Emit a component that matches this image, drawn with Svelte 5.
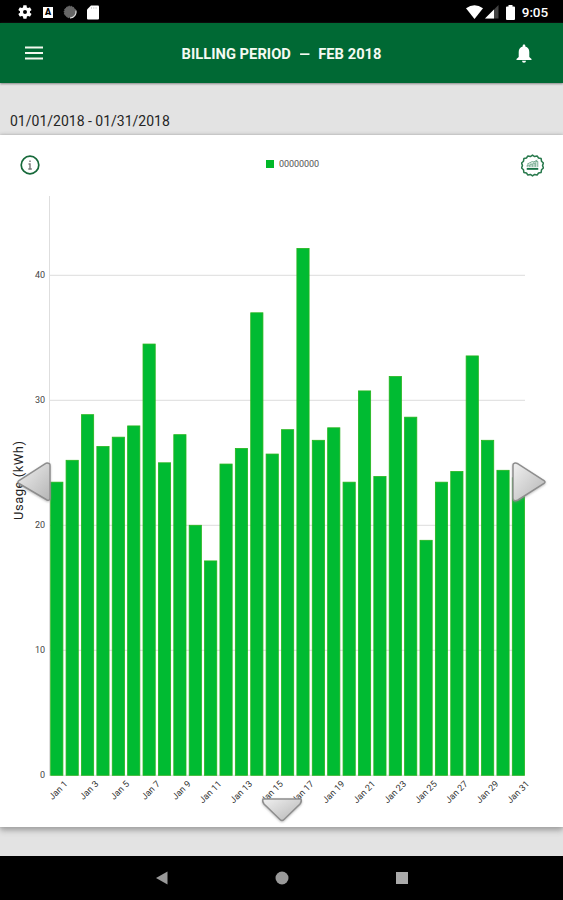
<script>
  const values = [23.45, 25.2, 28.85, 26.3, 27.05, 27.95, 34.5, 25.0, 27.25, 20.0, 17.15, 24.9, 26.15, 37.0, 25.7, 27.65,
    42.15, 26.8, 27.8, 23.45, 30.75, 23.9, 31.9, 28.65, 18.8, 23.45, 24.3, 33.55, 26.8, 24.4, 23.8];
  const ticks = [0, 10, 20, 30, 40];
  const left = 50;
  const base = 640.3;
  const unit = 12.5;
  const pitch = 15.387;
  const y = (v) => base - v * unit;
  const labels = values.map((_, i) => i).filter((i) => i % 2 === 0);
</script>

<div class="screen">
  <div class="status">
    <div class="left">
      <svg class="gear" width="16" height="16" viewBox="0 0 24 24"><path fill="#fff" d="M19.4 13a7.500 7.500 0 0 0 0-2l2.100-1.600c.2-.2.3-.4.1-.7l-2-3.400c-.1-.2-.4-.3-.6-.2l-2.500 1a7.300 7.300 0 0 0-1.700-1l-.4-2.600c0-.3-.2-.5-.5-.5h-4c-.2 0-.4.2-.5.5L9 5.100a7.500 7.500 0 0 0-1.700 1l-2.500-1c-.2-.1-.5 0-.6.2l-2 3.400c-.1.300 0 .5.2.7L4.500 11a8 8 0 0 0 0 2l-2.100 1.600c-.2.200-.3.400-.2.700l2 3.400c.1.200.4.300.6.200l2.500-1c.5.400 1.100.7 1.700 1l.4 2.600c.1.300.3.500.5.500h4c.3 0 .5-.2.5-.5l.4-2.600a7.300 7.300 0 0 0 1.700-1l2.500 1c.2.100.5 0 .6-.2l2-3.400c.2-.3.100-.5-.1-.7zM12 15a3 3 0 1 1 0-6 3 3 0 0 1 0 6z" /></svg>
      <span class="a-badge">A</span>
      <svg class="sync" width="14" height="14" viewBox="0 0 14 14"><circle cx="7" cy="7" r="5.800" fill="#666" stroke="#777" stroke-dasharray="1.500 1" /><path d="M12.800 5.500A6 6 0 0 1 7 13" fill="none" stroke="#ddd" stroke-width="1.200" /></svg>
      <svg class="sd" width="12" height="15" viewBox="0 0 12 15"><path fill="#fff" d="M4 .5h7a1 1 0 0 1 1 1v12a1 1 0 0 1-1 1H1a1 1 0 0 1-1-1V4.500z" /><path d="M4.500 2v2M6.800 2v2M9.100 2v2" stroke="#ccc" stroke-width=".8" /></svg>
    </div>
    <div class="right">
      <svg width="17" height="14" viewBox="0 0 17 14"><path fill="#fff" d="M0 3.300Q8.500-3 17 3.300L8.500 14z" /></svg>
      <svg class="signal" width="14" height="14" viewBox="0 0 14 14"><path fill="#444" d="M13.500 0v13.500H0z" /><path fill="#fff" d="M9 4.500v9H0z" /></svg>
      <svg class="battery" width="9" height="15" viewBox="0 0 9 15"><path fill="#fff" d="M2.500 0h4v1.500H8a1 1 0 0 1 1 1V14a1 1 0 0 1-1 1H1a1 1 0 0 1-1-1V2.500a1 1 0 0 1 1-1h1.500z" /></svg>
      <span class="time">9:05</span>
    </div>
  </div>

  <header>
    <svg width="18" height="14" viewBox="0 0 18 14"><path d="M0 1.500h18M0 7h18M0 12.500h18" stroke="#f2f8ee" stroke-width="2" /></svg>
    <h1>BILLING PERIOD<span class="dash">–</span>FEB 2018</h1>
    <svg width="16" height="19" viewBox="0 0 16 19"><path fill="#fff" d="M8 .5c.8 0 1.300.5 1.300 1.300v.7c2.600.6 4 2.800 4 5.500v5l2.200 2v1H.5v-1l2.200-2V8c0-2.700 1.400-4.900 4-5.500v-.7C6.700 1 7.200.5 8 .5zM6 16.700h4a2 2 0 0 1-4 0z" /></svg>
  </header>

  <div class="dates">01/01/2018 - 01/31/2018</div>

  <main>
    <div class="tools">
      <svg width="20" height="20" viewBox="0 0 20 20"><circle cx="10" cy="10" r="8.800" fill="none" stroke="#17693a" stroke-width="1.700" /><path d="M10 5.500v1.500M8.500 9H10v5M8.300 14h3.500" fill="none" stroke="#777" stroke-width="1.400" /></svg>
      <div class="legend"><i></i><span>00000000</span></div>
      <svg width="23" height="23" viewBox="0 0 24 24">
        <path d="M12 1.200l2.200 1.500 2.600-.7 1.500 2.200 2.700.6.400 2.700 2 1.900-.9 2.600.9 2.600-2 1.900-.4 2.700-2.700.6-1.500 2.200-2.600-.7L12 22.800l-2.200-1.500-2.600.7-1.500-2.200-2.700-.6-.4-2.700-2-1.900.9-2.600-.9-2.600 2-1.900.4-2.700 2.700-.6L7.200 2l2.600.7z" fill="none" stroke="#28794c" stroke-width="1.600" stroke-linejoin="round" />
        <path d="M6 15.500h12" stroke="#187245" stroke-width="2" />
        <path d="M6.500 13.500v-2h2v2M9.500 13.500v-3h2v3M12.500 13.500V9.400h2v4.100M15.500 13.500V7.700h2v5.800M6.500 10.500l5-2.500 2 .2 3.500-2" fill="none" stroke="#4f9270" stroke-width=".8" />
      </svg>
    </div>
    <svg class="chart" width="563" height="692" viewBox="0 0 563 692">
      {#each ticks as tick}
        <path class="grid" d="M49 {y(tick)}H525" />
        <text class="tick" x="45" y={y(tick) + 3} text-anchor="end">{tick}</text>
      {/each}
      <path class="axis" d="M49.500 61V640.300" />
      {#each values as value, i}
        <rect class="bar" x={left + 0.7 + i * pitch} y={y(value)} width="12.200" height={value * unit} />
      {/each}
      {#each labels as i}
        <text class="day" text-anchor="end" transform="translate({68.2 + i * pitch} 649.5) rotate(-45)">Jan {i + 1}</text>
      {/each}
      <text class="unit" transform="translate(22.500 385) rotate(-90)" textLength="79">Usage (kWh)</text>
    </svg>

    <svg class="arrow prev" width="38" height="44" viewBox="0 0 38 44">
      <defs><linearGradient id="silver" x1="0" y1="0" x2="1" y2="1"><stop offset="0" stop-color="#f0f0f0" /><stop offset="1" stop-color="#b5b5b5" /></linearGradient></defs>
      <path d="M34 3.500Q35 3.500 35 6V38Q35 41 32 40L4 23.500Q2 22 4 20.500L30 3.800Q32 2.500 34 3.500z" />
    </svg>
    <svg class="arrow next" width="38" height="44" viewBox="0 0 38 44">
      <path d="M4 3.500Q5 2.500 8 3.800L34 20.500Q36 22 34 23.500L8 40Q3 42 3 38V6Q3 3.500 4 3.500z" />
    </svg>
    <svg class="arrow down" width="44" height="28" viewBox="0 0 44 28">
      <path d="M3 3H41Q42 5 40 8L24 23.500Q22 25.500 20 23.500L4 8Q2 5 3 3z" />
    </svg>
  </main>

  <div class="gap"></div>
  <nav>
    <svg width="12" height="14" viewBox="0 0 12 14"><path d="M11.500.5v13L0 7z" fill="#999" /></svg>
    <svg width="14" height="14" viewBox="0 0 14 14"><circle cx="7" cy="7" r="6.500" fill="#999" /></svg>
    <svg width="12" height="12" viewBox="0 0 12 12"><rect width="12" height="12" fill="#aaa" /></svg>
  </nav>
</div>

<style>
  .screen {
    width: 563px;
    height: 900px;
    display: flex;
    flex-direction: column;
    background: #e3e3e3;
    font-family: Roboto, sans-serif;
    overflow: hidden;
  }
  svg { display: block; flex: none; }
  .status {
    height: 23px;
    flex: none;
    background: #000;
    display: flex;
    justify-content: space-between;
    padding: 1px 15px 0 17px;
    box-sizing: border-box;
  }
  .left, .right { display: flex; align-items: center; }
  .a-badge {
    width: 10px;
    height: 11px;
    margin-left: 10px;
    background: #fff;
    color: #000;
    font-size: 9px;
    line-height: 11px;
    font-weight: 900;
    text-align: center;
  }
  .sync { margin-left: 10px; }
  .sd { margin-left: 10px; }
  .signal { margin-left: 2px; }
  .battery { margin-left: 7px; }
  .time { color: #fff; font-size: 13.500px; font-weight: 500; margin-left: 7px; line-height: 20px; letter-spacing: -0.1px; }
  header {
    height: 60px;
    flex: none;
    box-sizing: border-box;
    padding: 0 31px 0 25px;
    background: #006934;
    display: flex;
    align-items: center;
    justify-content: space-between;
    box-shadow: 0 1px 2px #888;
  }
  h1 {
    margin: 2px 0 0 4px;
    color: #f4faf2;
    font-size: 14.700px;
    font-weight: 700;
    line-height: 20px;
    letter-spacing: 0.03px;
    white-space: nowrap;
  }
  .dash { display: inline-block; margin: 0 9px; transform: scaleX(1.25); }
  .dates {
    height: 52px;
    flex: none;
    box-sizing: border-box;
    padding: 28px 10px 0;
    font-size: 14px;
    line-height: 20px;
    color: #252525;
    white-space: nowrap;
  }
  main {
    position: relative;
    height: 692px;
    flex: none;
    background: #fff;
    box-shadow: 0 0 3px #aaa, 0 3px 6px #999;
  }
  .tools {
    position: absolute;
    inset: 18px 19px auto 20px;
    display: flex;
    align-items: center;
    justify-content: space-between;
    height: 24px;
  }
  .legend { display: flex; align-items: center; gap: 5px; font-size: 9px; letter-spacing: -0.03px; color: #555; margin: -2px 0 0 24px; }
  .legend i { width: 8px; height: 8px; background: #00b828; }
  .grid { stroke: #dcdcdc; }
  .axis { stroke: #dedede; }
  .bar { fill: #00bb32; stroke: #25b51c; stroke-width: 0.8; }
  .tick { font-size: 9px; fill: #444; }
  .day { font-size: 9px; fill: #333; }
  .unit { font-size: 13px; fill: #222; }
  .arrow { position: absolute; filter: drop-shadow(0 1px 1px #8888); }
  .arrow path { fill: url(#silver); stroke: #8e8e8e; stroke-width: 1.500; }
  .prev { left: 15px; top: 325px; }
  .next { left: 510px; top: 325px; }
  .down { left: 260px; top: 661px; }
  .gap { height: 29px; flex: none; }
  nav {
    height: 44px;
    background: #000;
    display: flex;
    align-items: center;
    justify-content: space-between;
    padding: 0 155px 0 156px;
  }
</style>
